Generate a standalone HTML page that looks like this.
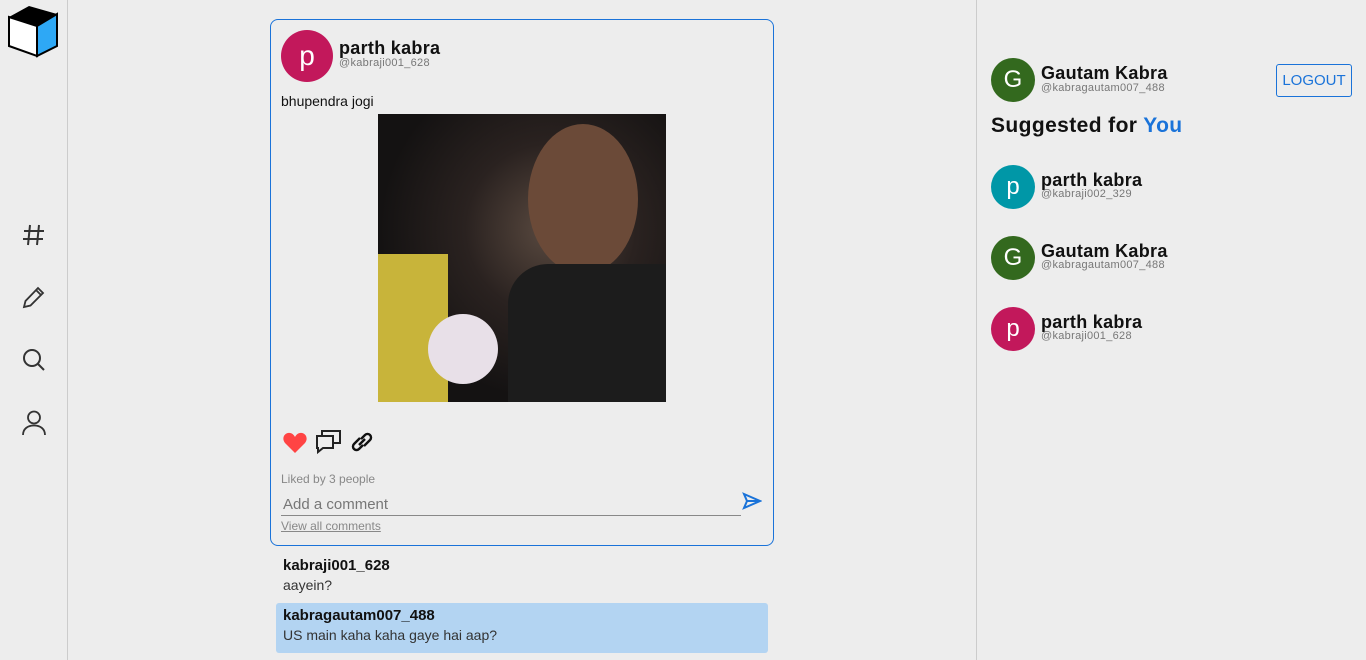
<!DOCTYPE html>
<html><head><style>
*{box-sizing:border-box;margin:0;padding:0}
body{width:1366px;height:660px;background:#ededed;font-family:"Liberation Sans",sans-serif;position:relative;overflow:hidden;color:#111}
.side{position:absolute;left:0;top:0;width:68px;height:660px;border-right:1px solid #ccc}
.right{position:absolute;left:976px;top:0;width:390px;height:660px;border-left:1px solid #ccc}
.av{position:absolute;width:44px;height:44px;border-radius:50%;color:#fff;font-size:24px;text-align:center;line-height:44px}
.nm{position:absolute;font-weight:bold;font-size:18px;letter-spacing:0.3px}
.hd{position:absolute;font-size:11px;color:#777;letter-spacing:0.3px}
.card{position:absolute;left:270px;top:19px;width:504px;height:527px;border:1px solid #1a73d9;border-radius:8px}
.ico{position:absolute;left:21px}
</style></head><body>
<div class="side">
<svg style="position:absolute;left:7px;top:4px" width="52" height="54" viewBox="0 0 52 54">
<polygon points="2,13 22,2 50,10 30,22" fill="#000"/>
<polygon points="2,13 30,22 30,52 2,42" fill="#fff" stroke="#000" stroke-width="2"/>
<polygon points="30,22 50,10 50,42 30,52" fill="#2ea8f5" stroke="#000" stroke-width="2"/>
</svg>
<svg class="ico" style="top:222px" width="26" height="26" fill="none" stroke="#333" stroke-width="2"><path d="M9 3L7 23 M18 3l-2 20 M3 9h20 M2 17h20"/></svg>
<svg class="ico" style="top:284px" width="26" height="26" fill="none" stroke="#333" stroke-width="1.8"><path d="M3 23l1.5-6L17 4l5 5L9.5 21.5z M15 6l5 5"/></svg>
<svg class="ico" style="top:347px" width="26" height="26" fill="none" stroke="#333" stroke-width="2"><circle cx="11" cy="11" r="8"/><path d="M17 17l6 6"/></svg>
<svg class="ico" style="top:409px" width="26" height="28" fill="none" stroke="#333" stroke-width="1.8"><circle cx="13" cy="8.5" r="6"/><path d="M2 26c0-6 4.5-9.5 11-9.5s11 3.5 11 9.5"/></svg>
</div>
<div class="card">
<div class="av" style="left:10px;top:10px;width:52px;height:52px;line-height:52px;font-size:28px;background:#c2185b">p</div>
<div class="nm" style="left:68px;top:18px">parth kabra</div>
<div class="hd" style="left:68px;top:37px">@kabraji001_628</div>
<div style="position:absolute;left:10px;top:73px;font-size:14px">bhupendra jogi</div>
<div style="position:absolute;left:107px;top:94px;width:288px;height:288px;background:radial-gradient(ellipse at 60% 40%,#5a4a40 0,#2a2220 35%,#141212 70%);overflow:hidden">
<div style="position:absolute;left:150px;top:10px;width:110px;height:150px;border-radius:50%;background:#6b4a38"></div>
<div style="position:absolute;left:130px;top:150px;width:158px;height:138px;background:#1c1c1c;border-radius:40px 0 0 0"></div>
<div style="position:absolute;left:0;top:140px;width:70px;height:148px;background:#c8b43a"></div>
<div style="position:absolute;left:50px;top:200px;width:70px;height:70px;border-radius:50%;background:#e8e0e8"></div>
</div>
<svg style="position:absolute;left:11px;top:411px" width="26" height="24"><path d="M13 22L3 12C-1 7 3 1 8 2c2 0 4 2 5 4 1-2 3-4 5-4 5-1 9 5 5 10z" fill="#f44"/></svg>
<svg style="position:absolute;left:44px;top:409px" width="28" height="26" fill="none" stroke="#222" stroke-width="2"><path d="M2 7h16v12H8l-5 4v-4H2z M7 7V2h18v12h-7"/></svg>
<svg style="position:absolute;left:78px;top:409px" width="26" height="26" fill="none" stroke="#111" stroke-width="2.4"><path d="M11 9l-6 6a3.5 3.5 0 005 5l4-4 M15 17l6-6a3.5 3.5 0 00-5-5l-4 4 M10 16l6-6"/></svg>
<div style="position:absolute;left:10px;top:452px;font-size:12px;color:#888">Liked by 3 people</div>
<div style="position:absolute;left:10px;top:476px;width:460px;height:20px;border-bottom:1px solid #888;font-size:15px;color:#777;padding-left:2px">Add a comment</div>
<svg style="position:absolute;left:471px;top:472px" width="20" height="18" fill="none" stroke="#1a73d9" stroke-width="2"><path d="M2 2l16 7-16 7 3-7z M5 9h13"/></svg>
<div style="position:absolute;left:10px;top:499px;font-size:12px;color:#888;text-decoration:underline">View all comments</div>
</div>
<div style="position:absolute;left:283px;top:557px;font-weight:bold;font-size:15px">kabraji001_628</div>
<div style="position:absolute;left:283px;top:577px;font-size:14px;color:#333">aayein?</div>
<div style="position:absolute;left:276px;top:603px;width:492px;height:50px;background:#b3d4f2;border-radius:3px"></div>
<div style="position:absolute;left:283px;top:607px;font-weight:bold;font-size:15px">kabragautam007_488</div>
<div style="position:absolute;left:283px;top:627px;font-size:14px;color:#333">US main kaha kaha gaye hai aap?</div>
<div class="right">
<div class="av" style="left:14px;top:58px;background:#33691e">G</div>
<div class="nm" style="left:64px;top:63px">Gautam Kabra</div>
<div class="hd" style="left:64px;top:82px">@kabragautam007_488</div>
<div style="position:absolute;left:299px;top:64px;width:76px;height:33px;border:1px solid #1a73d9;border-radius:3px;color:#1a73d9;font-size:15px;text-align:center;line-height:31px">LOGOUT</div>
<div style="position:absolute;left:14px;top:114px;font-weight:bold;font-size:21px;letter-spacing:0.4px">Suggested for <span style="color:#1a73d9">You</span></div>
<div class="av" style="left:14px;top:165px;background:#0097a7">p</div>
<div class="nm" style="left:64px;top:170px">parth kabra</div>
<div class="hd" style="left:64px;top:188px">@kabraji002_329</div>
<div class="av" style="left:14px;top:236px;background:#33691e">G</div>
<div class="nm" style="left:64px;top:241px">Gautam Kabra</div>
<div class="hd" style="left:64px;top:259px">@kabragautam007_488</div>
<div class="av" style="left:14px;top:307px;background:#c2185b">p</div>
<div class="nm" style="left:64px;top:312px">parth kabra</div>
<div class="hd" style="left:64px;top:330px">@kabraji001_628</div>
</div>
</body></html>
